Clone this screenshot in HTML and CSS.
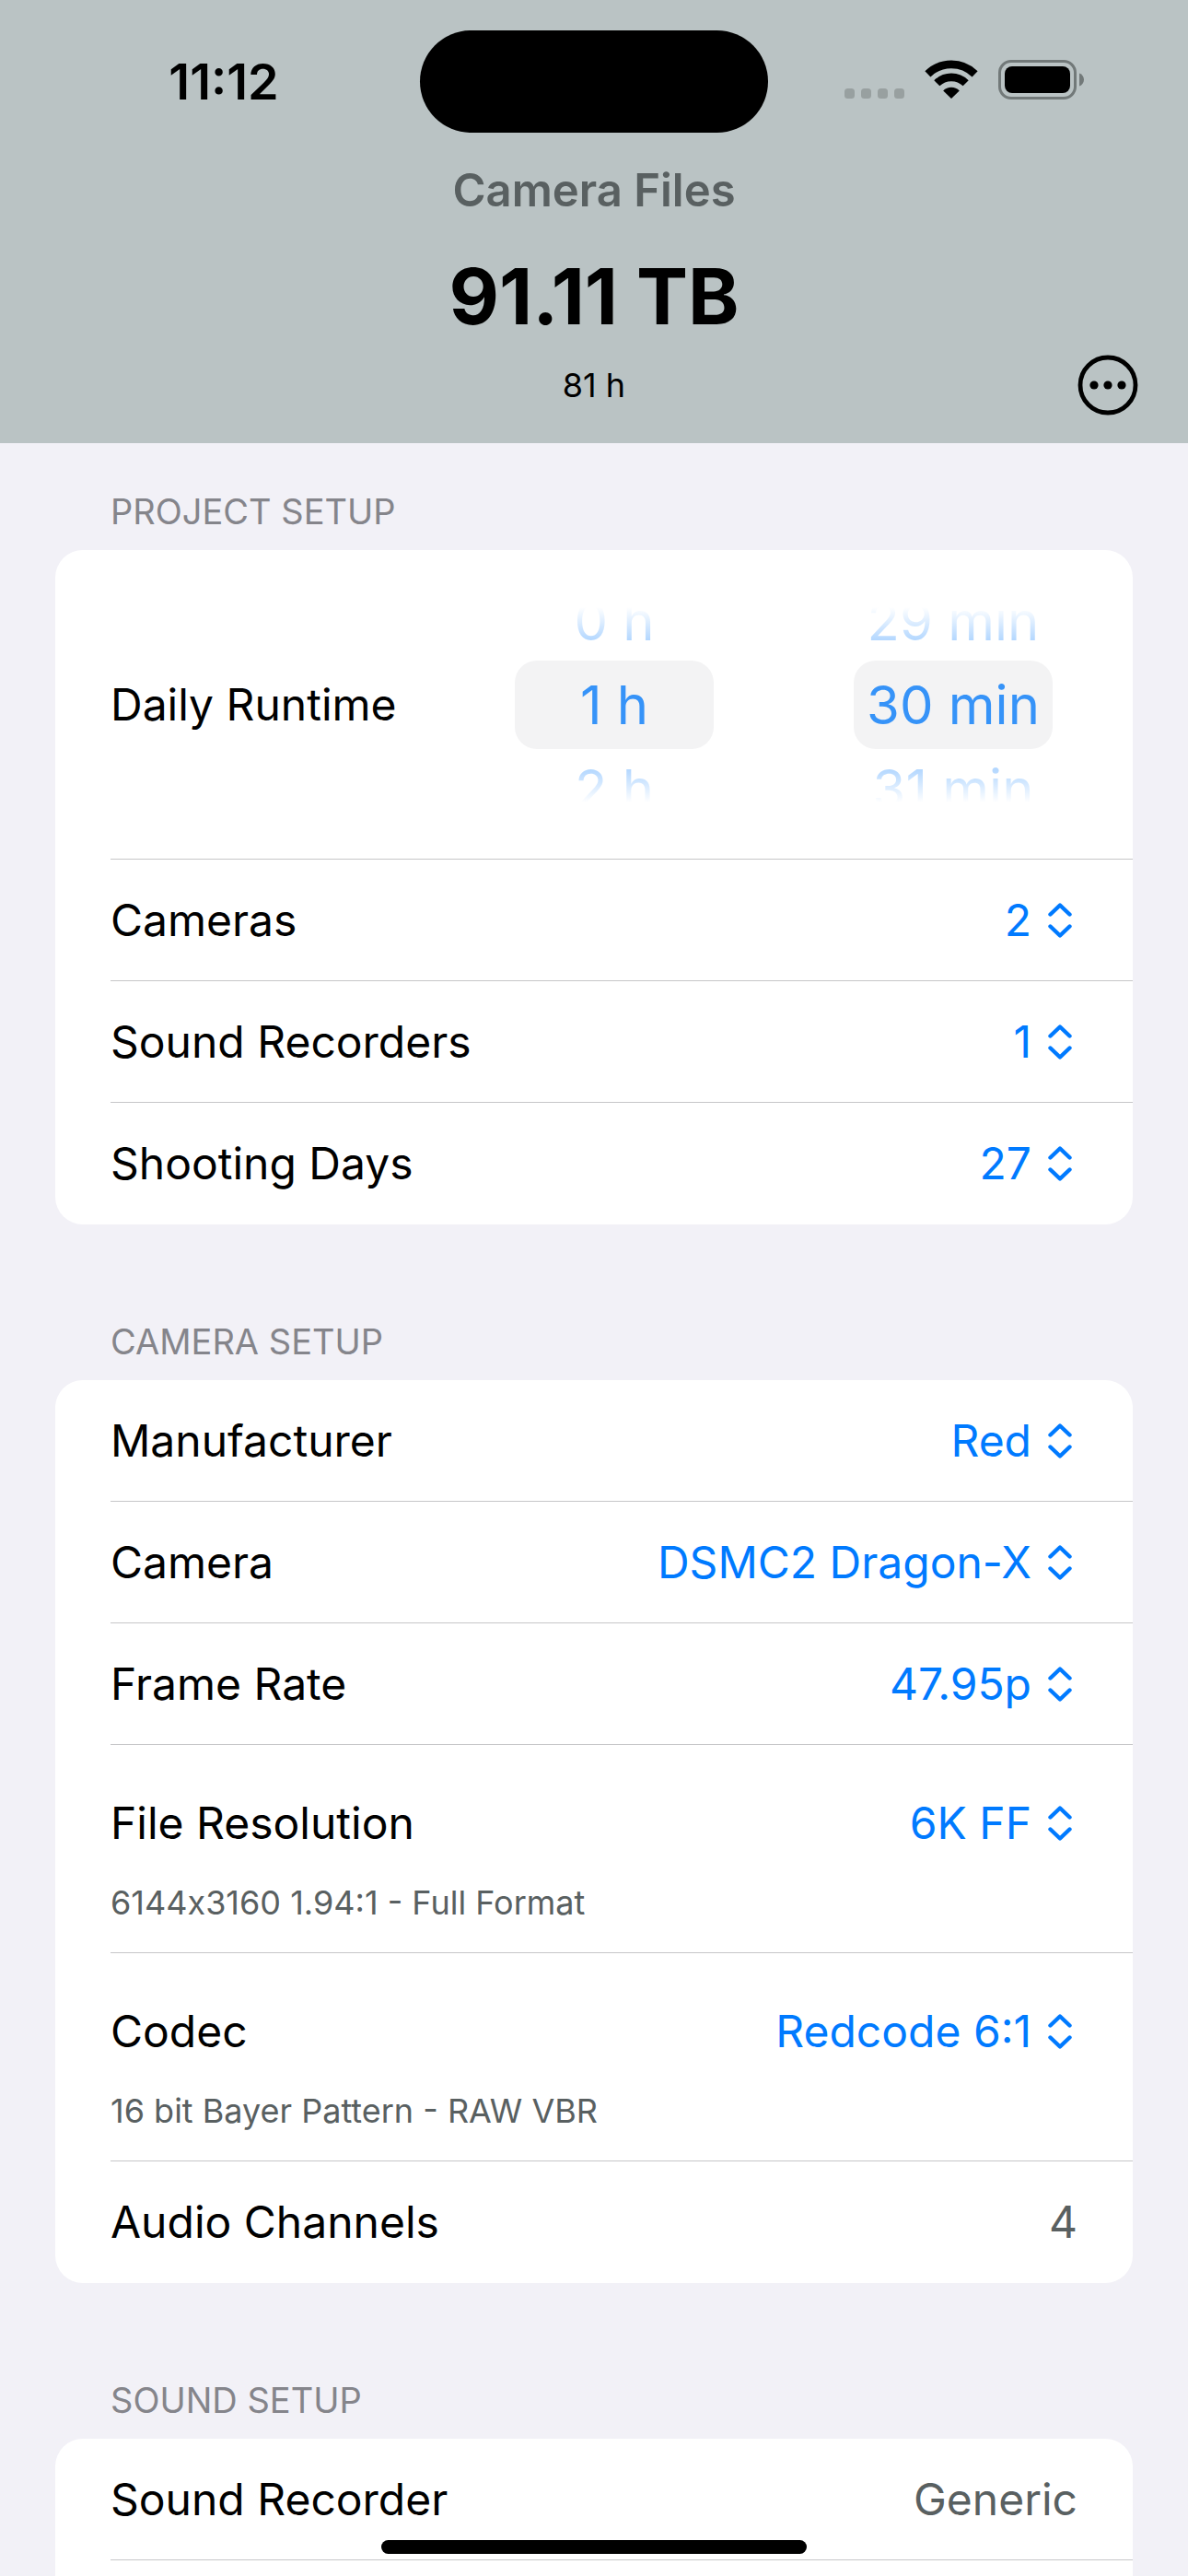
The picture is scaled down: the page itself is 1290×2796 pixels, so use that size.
FILE: index.html
```html
<!DOCTYPE html>
<html lang="en">
<head>
    <meta charset="UTF-8">
    <meta name="viewport" content="width=device-width, initial-scale=1.0">
    <title>Camera Files</title>
    <link rel="stylesheet" href="styles.css">
</head>
<body>
    <svg class="sprite" aria-hidden="true">
        <symbol id="updown" viewBox="0 0 32 38">
            <path d="M2.5 12.5 L13 2.5 L23.5 12.5 M2.5 25.5 L13 35.5 L23.5 25.5" fill="none" stroke="currentColor" stroke-width="4.4" stroke-linecap="round" stroke-linejoin="round"/>
        </symbol>
    </svg>

    <header class="header">
        <div class="status-bar">
            <div class="time">11:12</div>
            <div class="island"></div>
            <div class="status-icons">
                <svg width="65" height="43" viewBox="0 0 65 43" fill="#98a0a0">
                    <rect x="0" y="31" width="11" height="11" rx="3.5"/>
                    <rect x="18" y="31" width="11" height="11" rx="3.5"/>
                    <rect x="36" y="31" width="11" height="11" rx="3.5"/>
                    <rect x="54" y="31" width="11" height="11" rx="3.5"/>
                </svg>
                <svg width="58" height="43" viewBox="0 0 58 43">
                    <path d="M3.4 15.4 A36.5 36.5 0 0 1 54.6 15.4" fill="none" stroke="#000" stroke-width="8.6"/>
                    <path d="M13.3 25.3 A22.3 22.3 0 0 1 44.7 25.3" fill="none" stroke="#000" stroke-width="8.6"/>
                    <path d="M29 42 L20.2 33.4 A12.4 12.4 0 0 1 37.8 33.4 Z"/>
                </svg>
                <svg width="94" height="43" viewBox="0 0 94 43">
                    <rect x="1.5" y="1.5" width="82" height="40" rx="12.5" fill="none" stroke="#727979" stroke-width="3"/>
                    <rect x="7" y="7" width="71" height="29" rx="8"/>
                    <path d="M88 14.5 C91 15.5 93 18.5 93 21.5 C93 24.5 91 27.5 88 28.5 Z" fill="#727979"/>
                </svg>
            </div>
        </div>
        <h1 class="title">Camera Files</h1>
        <div class="total">91.11 TB</div>
        <div class="header-foot">
            <div class="hours">81 h</div>
            <button class="more" type="button" aria-label="More">
                <svg width="66" height="66" viewBox="0 0 66 66">
                    <circle cx="33" cy="33" r="30" fill="none" stroke="#000" stroke-width="4.8"/>
                    <circle cx="18" cy="33" r="4.6"/>
                    <circle cx="33" cy="33" r="4.6"/>
                    <circle cx="48" cy="33" r="4.6"/>
                </svg>
            </button>
        </div>
    </header>

    <main class="list">
        <section>
            <h2 class="section-title">PROJECT SETUP</h2>
            <div class="card">
                <div class="row runtime">
                    <span class="label">Daily Runtime</span>
                    <div class="wheels">
                        <div class="wheel" role="radiogroup" aria-label="Hours">
                            <label class="above"><input type="radio" name="hours">0 h</label>
                            <label class="current"><input type="radio" name="hours" checked>1 h</label>
                            <label class="below"><input type="radio" name="hours">2 h</label>
                        </div>
                        <div class="wheel" role="radiogroup" aria-label="Minutes">
                            <label class="above"><input type="radio" name="minutes">29 min</label>
                            <label class="current"><input type="radio" name="minutes" checked>30 min</label>
                            <label class="below"><input type="radio" name="minutes">31 min</label>
                        </div>
                    </div>
                </div>
                <div class="row">
                    <label class="label" for="cameras">Cameras</label>
                    <div class="picker">
                        <select id="cameras"><option>2</option></select>
                        <svg class="updown"><use href="#updown"/></svg>
                    </div>
                </div>
                <div class="row">
                    <label class="label" for="recorders">Sound Recorders</label>
                    <div class="picker">
                        <select id="recorders"><option>1</option></select>
                        <svg class="updown"><use href="#updown"/></svg>
                    </div>
                </div>
                <div class="row">
                    <label class="label" for="days">Shooting Days</label>
                    <div class="picker">
                        <select id="days"><option>27</option></select>
                        <svg class="updown"><use href="#updown"/></svg>
                    </div>
                </div>
            </div>
        </section>

        <section>
            <h2 class="section-title">CAMERA SETUP</h2>
            <div class="card">
                <div class="row">
                    <label class="label" for="manufacturer">Manufacturer</label>
                    <div class="picker">
                        <select id="manufacturer"><option>Red</option></select>
                        <svg class="updown"><use href="#updown"/></svg>
                    </div>
                </div>
                <div class="row">
                    <label class="label" for="camera">Camera</label>
                    <div class="picker">
                        <select id="camera"><option>DSMC2 Dragon-X</option></select>
                        <svg class="updown"><use href="#updown"/></svg>
                    </div>
                </div>
                <div class="row">
                    <label class="label" for="rate">Frame Rate</label>
                    <div class="picker">
                        <select id="rate"><option>47.95p</option></select>
                        <svg class="updown"><use href="#updown"/></svg>
                    </div>
                </div>
                <div class="row tall">
                    <label class="label" for="resolution">File Resolution</label>
                    <div class="picker">
                        <select id="resolution"><option>6K FF</option></select>
                        <svg class="updown"><use href="#updown"/></svg>
                    </div>
                    <p class="note"><span class="plain">6144x3160</span> 1.94:1 - Full Format</p>
                </div>
                <div class="row tall">
                    <label class="label" for="codec">Codec</label>
                    <div class="picker">
                        <select id="codec"><option>Redcode 6:1</option></select>
                        <svg class="updown"><use href="#updown"/></svg>
                    </div>
                    <p class="note">16 bit Bayer Pattern - RAW VBR</p>
                </div>
                <div class="row">
                    <span class="label">Audio Channels</span>
                    <span class="value">4</span>
                </div>
            </div>
        </section>

        <section>
            <h2 class="section-title">SOUND SETUP</h2>
            <div class="card">
                <div class="row">
                    <span class="label">Sound Recorder</span>
                    <span class="value">Generic</span>
                </div>
                <div class="row"></div>
            </div>
        </section>
    </main>

    <div class="home-indicator"></div>
</body>
</html>
```
FILE: styles.css
```css
* {
    box-sizing: border-box;
}
body {
    margin: 0;
    height: 100vh;
    display: flex;
    flex-direction: column;
    overflow: hidden;
    background-color: #f2f1f7;
    color: #000;
    font-family: Inter, "Liberation Sans", sans-serif;
    font-size: 48px;
    line-height: 60px;
}
h1, h2, p {
    margin: 0;
}
.sprite {
    display: none;
}

/* header */
.header {
    flex: none;
    background-color: #bac3c4;
    padding-bottom: 30px;
    text-align: center;
}
.status-bar {
    display: grid;
    grid-template-columns: 1fr 378px 1fr;
    align-items: center;
    height: 177px;
}
.time {
    padding-left: 30px;
    font-size: 54px;
    font-weight: 600;
}
.island {
    height: 111px;
    border-radius: 56px;
    background-color: #000;
}
.status-icons {
    display: flex;
    justify-content: center;
    gap: 22px;
    padding: 0 30px 4px 0;
}
.title {
    font-size: 49px;
    font-weight: 600;
    line-height: 60px;
    color: #596061;
}
.total {
    margin-top: 37px;
    font-size: 84px;
    font-weight: 700;
    line-height: 96px;
}
.header-foot {
    display: grid;
    grid-template-columns: 1fr auto 1fr;
    align-items: center;
    margin-top: 15px;
    padding: 0 54px;
}
.hours {
    grid-column: 2;
    font-size: 36px;
}
.more {
    justify-self: end;
    display: flex;
    padding: 0;
    border: none;
    background: none;
    cursor: pointer;
}

/* grouped list */
.list {
    flex: 1;
    min-height: 0;
    overflow: hidden;
    padding: 44px 60px 0;
}
.section-title {
    padding: 0 60px 12px;
    font-size: 38px;
    font-weight: 400;
    color: #85858b;
}
.card {
    margin-bottom: 97px;
    padding-left: 60px;
    border-radius: 30px;
    background-color: #fff;
}
.row {
    display: flex;
    align-items: center;
    justify-content: space-between;
    height: 132px;
    padding-right: 60px;
    border-bottom: 1px solid #c6c6c8;
}
.row:last-child {
    border-bottom: none;
}
.tall {
    flex-wrap: wrap;
    align-content: flex-start;
    height: 226px;
    padding-top: 55px;
}
.note {
    width: 100%;
    margin-top: 26px;
    font-size: 36px;
    color: #596061;
}
/* keeps the x between numbers a letter */
.plain {
    font-variant-ligatures: no-contextual;
}
.value {
    color: #596061;
}
.picker {
    display: flex;
    align-items: center;
    gap: 18px;
    color: #007aff;
}
.picker select {
    appearance: none;
    margin: 0;
    padding: 0;
    border: none;
    background: none;
    color: inherit;
    font: inherit;
    text-align: right;
    cursor: pointer;
}
.updown {
    width: 32px;
    height: 38px;
}

/* runtime wheels */
.runtime {
    height: 336px;
    padding-right: 87px;
}
.wheels {
    display: flex;
    gap: 152px;
}
.wheel {
    display: flex;
    flex-direction: column;
    width: 216px;
    font-size: 58px;
    text-align: center;
    white-space: nowrap;
}
.wheel label {
    flex: none;
    height: 60px;
    line-height: 34px;
    color: #007aff;
    cursor: pointer;
}
.wheel input {
    position: absolute;
    appearance: none;
    margin: 0;
    opacity: 0;
}
.wheel .current {
    height: 96px;
    border-radius: 24px;
    background-color: #f3f3f4;
    line-height: 96px;
    color: #3693f8;
}
.wheel .above {
    background: linear-gradient(to top, #b3d7ff 22px, #fff 58px);
    background-clip: text;
    color: transparent;
}
.wheel .below {
    padding-top: 26px;
    background: linear-gradient(to bottom, #b3d7ff 22px, #fff 58px);
    background-clip: text;
    color: transparent;
}

/* sits over the list at the bottom edge */
.home-indicator {
    position: fixed;
    bottom: 24px;
    left: 50%;
    width: 462px;
    height: 15px;
    margin-left: -231px;
    border-radius: 8px;
    background-color: #000;
}
```
